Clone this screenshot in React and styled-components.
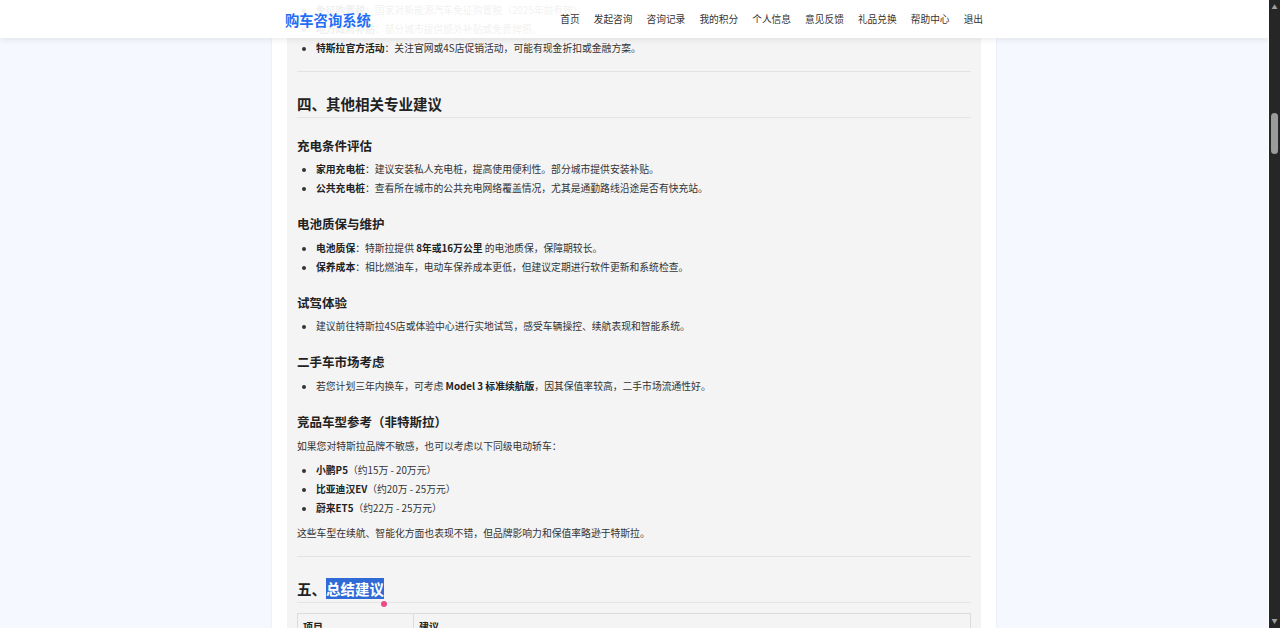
import React from 'react';
import styled, { createGlobalStyle } from 'styled-components';

const GlobalStyle = createGlobalStyle`
  html, body {
    margin: 0;
    padding: 0;
    height: 100%;
    overflow: hidden;
    background: #f5f8fe;
    font-family: "Noto Sans CJK SC", "Noto Sans", sans-serif;
  }
  #root {
    height: 100%;
  }
`;

const navItems = ['首页', '发起咨询', '咨询记录', '我的积分', '个人信息', '意见反馈', '礼品兑换', '帮助中心', '退出'];

const App = () => (
  <Screen>
    <GlobalStyle />
    <Viewport>
      <Header>
        <HeaderInner>
          <Brand>购车咨询系统</Brand>
          <Nav>
            {navItems.map(item => (
              <NavLink key={item}>{item}</NavLink>
            ))}
          </Nav>
        </HeaderInner>
      </Header>
      <Container>
        <Article>
          <List first>
            <Item>
              <b>免征购置税</b>：国家对新能源汽车免征购置税（2025年前有效）。
            </Item>
            <Item>
              <b>地方政府补贴</b>：部分城市提供额外补贴或免费牌照。
            </Item>
            <Item>
              <b>特斯拉官方活动</b>：关注官网或4S店促销活动，可能有现金折扣或金融方案。
            </Item>
          </List>
          <Rule />
          <H2>四、其他相关专业建议</H2>
          <H3 afterH2>充电条件评估</H3>
          <List>
            <Item>
              <b>家用充电桩</b>：建议安装私人充电桩，提高使用便利性。部分城市提供安装补贴。
            </Item>
            <Item>
              <b>公共充电桩</b>：查看所在城市的公共充电网络覆盖情况，尤其是通勤路线沿途是否有快充站。
            </Item>
          </List>
          <H3>电池质保与维护</H3>
          <List>
            <Item>
              <b>电池质保</b>：特斯拉提供 <b>8年或16万公里</b> 的电池质保，保障期较长。
            </Item>
            <Item>
              <b>保养成本</b>：相比燃油车，电动车保养成本更低，但建议定期进行软件更新和系统检查。
            </Item>
          </List>
          <H3>试驾体验</H3>
          <List>
            <Item>建议前往特斯拉4S店或体验中心进行实地试驾，感受车辆操控、续航表现和智能系统。</Item>
          </List>
          <H3>二手车市场考虑</H3>
          <List>
            <Item>
              若您计划三年内换车，可考虑 <b>Model 3 标准续航版</b>，因其保值率较高，二手市场流通性好。
            </Item>
          </List>
          <H3>竞品车型参考（非特斯拉）</H3>
          <Para>如果您对特斯拉品牌不敏感，也可以考虑以下同级电动轿车：</Para>
          <List>
            <Item>
              <b>小鹏P5</b>（约15万 - 20万元）
            </Item>
            <Item>
              <b>比亚迪汉EV</b>（约20万 - 25万元）
            </Item>
            <Item>
              <b>蔚来ET5</b>（约22万 - 25万元）
            </Item>
          </List>
          <Para>这些车型在续航、智能化方面也表现不错，但品牌影响力和保值率略逊于特斯拉。</Para>
          <Rule />
          <H2>
            五、<Selected>总结建议<Caret /></Selected>
          </H2>
          <Table>
            <thead>
              <tr>
                <Th narrow>项目</Th>
                <Th>建议</Th>
              </tr>
            </thead>
          </Table>
        </Article>
      </Container>
    </Viewport>
    <Scrollbar>
      <Arrow>▲</Arrow>
      <Track>
        <Thumb />
      </Track>
      <Arrow>▼</Arrow>
    </Scrollbar>
  </Screen>
);

const Screen = styled.div`
  display: flex;
  height: 628px;
  overflow: hidden;
`;

const Viewport = styled.div`
  position: relative;
  flex: 1;
  height: 100%;
  overflow: hidden;
  border-right: 1px solid #ffffff;
`;

const Header = styled.header`
  position: absolute;
  top: 0;
  left: 0;
  right: 0;
  z-index: 2;
  height: 38px;
  background: rgba(255, 255, 255, 0.93);
  box-shadow: 0 2px 6px rgba(0, 0, 0, 0.08);
`;

const HeaderInner = styled.div`
  width: 724px;
  height: 100%;
  margin: 0 auto;
  padding: 0 13px;
  box-sizing: border-box;
  display: flex;
  align-items: center;
  justify-content: space-between;
`;

const Brand = styled.div`
  font-size: 14.3px;
  font-weight: 700;
  color: #1f6ef5;
`;

const Nav = styled.nav`
  display: flex;
  gap: 14.1px;
`;

const NavLink = styled.a`
  font-size: 9.7px;
  color: #333;
  cursor: pointer;
`;

const Container = styled.main`
  width: 724px;
  height: 100%;
  margin: 0 auto;
  padding: 0 15px;
  box-sizing: border-box;
  background: #ffffff;
  box-shadow: 0 0 2px rgba(180, 190, 210, 0.35);
`;

const Article = styled.article`
  background: #f4f4f4;
  height: 100%;
  padding: 0.5px 10px 0;
  box-sizing: border-box;
  color: #333;
  font-size: 9.8px;
  b {
    color: #222;
    font-weight: 700;
  }
`;

const List = styled.ul`
  margin: ${props => (props.first ? '0' : '5px')} 0 5px;
  padding-left: 19px;
`;

const Item = styled.li`
  line-height: 19px;
`;

const Para = styled.p`
  margin: 6px 0 5px;
  line-height: 19px;
`;

const Rule = styled.hr`
  border: 0;
  border-top: 1px solid #e2e2e2;
  margin: 13px 0;
`;

const H2 = styled.h2`
  position: relative;
  font-size: 14.5px;
  line-height: 20px;
  font-weight: 700;
  color: #222;
  margin: 22px 0 10px;
  padding-bottom: 3px;
  border-bottom: 1px solid #e4e4e4;
`;

const H3 = styled.h3`
  font-size: 12.5px;
  line-height: 18px;
  font-weight: 700;
  color: #222;
  margin: ${props => (props.afterH2 ? '19px' : '17px')} 0 5.5px;
`;

const Selected = styled.span`
  position: relative;
  background: #2f6ad6;
  color: #ffffff;
`;

const Caret = styled.span`
  position: absolute;
  right: -3px;
  bottom: -8px;
  width: 6px;
  height: 6px;
  border-radius: 50%;
  background: #ea4c89;
`;

const Table = styled.table`
  width: 100%;
  border-collapse: collapse;
  margin-top: 10px;
`;

const Th = styled.th`
  box-sizing: border-box;
  width: ${props => (props.narrow ? '116px' : 'auto')};
  border: 1px solid #dcdcdc;
  padding: 5px 5px;
  text-align: left;
  font-size: 10px;
  font-weight: 700;
  color: #222;
  background: #f4f4f4;
`;

const Scrollbar = styled.div`
  width: 11px;
  height: 100%;
  background: #262626;
  display: flex;
  flex-direction: column;
  align-items: center;
`;

const Arrow = styled.div`
  height: 14px;
  font-size: 6px;
  line-height: 14px;
  color: #a0a0a0;
`;

const Track = styled.div`
  flex: 1;
  width: 100%;
  display: flex;
  justify-content: center;
`;

const Thumb = styled.div`
  margin-top: 99px;
  width: 7px;
  height: 41px;
  border-radius: 4px;
  background: #9b9b9b;
`;

export default App;
